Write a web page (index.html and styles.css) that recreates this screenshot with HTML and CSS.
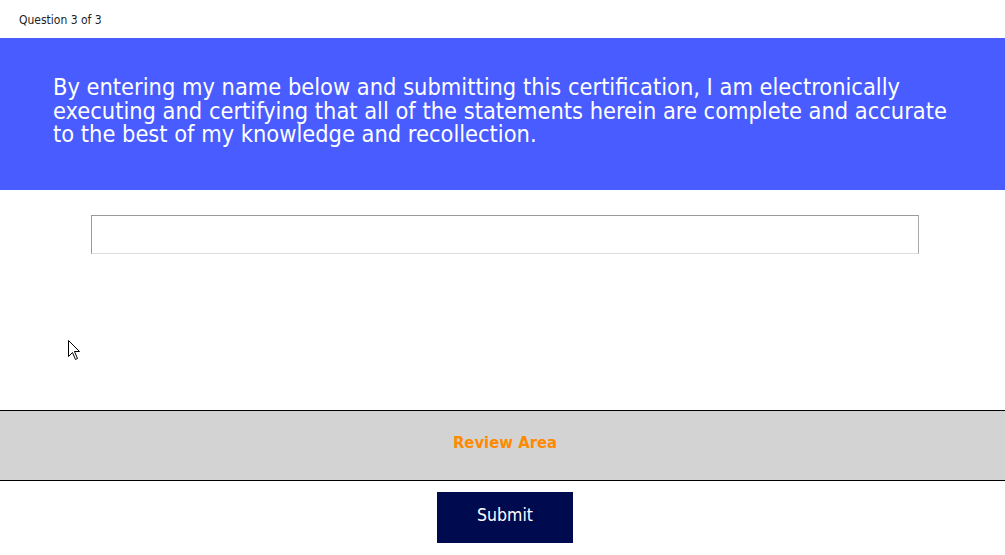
FILE: index.html
```html
<!DOCTYPE html>
<html>
<head>
<meta charset="utf-8">
<link rel="stylesheet" href="styles.css">
</head>
<body>
<div class="page">
  <div class="counter">Question 3 of 3</div>
  <div class="prompt">
    <p class="prompt-text">By entering my name below and submitting this certification, I am electronically executing and certifying that all of the statements herein are complete and accurate to the best of my knowledge and recollection.</p>
  </div>
  <div class="answer">
    <input class="name-input" type="text">
  </div>
  <div class="spacer"></div>
  <div class="review"><span class="review-label">Review Area</span></div>
  <div class="actions">
    <button class="submit" type="button">Submit</button>
  </div>
  <svg class="cursor" width="13" height="21" viewBox="0 0 13 21">
    <path d="M0.5 0.5 L0.5 16.5 L4.5 12.5 L7.5 19.5 L9.5 18.5 L6.5 11.5 L11.5 11.5 Z" fill="#fff" stroke="#000" stroke-width="1" stroke-linejoin="miter"/>
  </svg>
</div>
</body>
</html>
```

FILE: styles.css
```css
html, body {
  margin: 0;
  padding: 0;
  background: #fff;
}
.page {
  position: relative;
  width: 1005px;
  height: 555px;
  font-family: "DejaVu Sans Condensed", "DejaVu Sans", sans-serif;
  font-stretch: condensed;
}
.counter {
  height: 38px;
  box-sizing: border-box;
  padding: 13px 0 0 19px;
  font-size: 12px;
  color: #222;
}
.prompt {
  background: #485cff;
  height: 152px;
  box-sizing: border-box;
  padding: 38px 50px 0 53px;
}
.prompt-text {
  margin: 0;
  color: #fff;
  font-size: 23.4px;
  line-height: 23.5px;
}
.answer {
  padding: 25px 0 0 91px;
  height: 40px;
}
.name-input {
  display: block;
  width: 828px;
  height: 39px;
  box-sizing: border-box;
  margin: 0;
  border-style: solid;
  border-width: 1px;
  border-color: #999 #aaa #ddd #999;
  background: #fff;
  outline: none;
}
.spacer {
  height: 155px;
}
.review {
  height: 71px;
  box-sizing: border-box;
  border-top: 1px solid #000;
  border-bottom: 1px solid #000;
  background: #d3d3d3;
  display: flex;
  align-items: center;
  justify-content: center;
  padding: 0 0 6px 5px;
}
.review-label {
  color: #ff8a00;
  font-weight: bold;
  font-size: 16.5px;
}
.actions {
  display: flex;
  justify-content: center;
  padding: 11px 0 0 5px;
}
.submit {
  width: 136px;
  height: 51px;
  border: none;
  background: #000a4f;
  color: #fff;
  font-family: "DejaVu Sans Condensed", "DejaVu Sans", sans-serif;
  font-stretch: condensed;
  font-size: 17.5px;
  padding: 0 0 5px 0;
}
.cursor {
  position: absolute;
  left: 68px;
  top: 340px;
}
```
